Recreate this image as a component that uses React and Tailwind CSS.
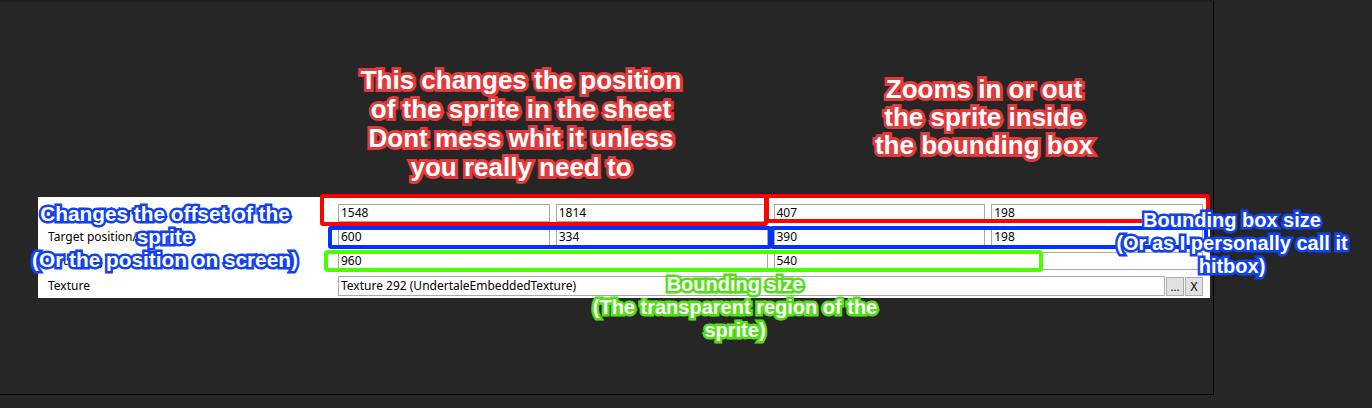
import React from 'react'

const rows = [
  { label: 'Source position/size', values: ['1548', '1814', '407', '198'] },
  { label: 'Target position/size', values: ['600', '334', '390', '198'] },
  { label: 'Bounding size', values: ['960', '540'] },
]

const notes = [
  {
    lines: ['This changes the position', 'of the sprite in the sheet', 'Dont mess whit it unless', 'you really need to'],
    cls: 'left-[341px] top-[66px] w-[360px] text-[26px] leading-[29px] [-webkit-text-stroke:6px_#e23a3a]',
  },
  {
    lines: ['Zooms in or out', 'the sprite inside', 'the bounding box'],
    cls: 'left-[834px] top-[75px] w-[300px] text-[26px] leading-[28px] [-webkit-text-stroke:6px_#e23a3a]',
  },
  {
    lines: ['Changes the offset of the', 'sprite', '(Or the position on screen)'],
    cls: 'left-[15px] top-[202px] w-[300px] text-[20.8px] leading-[23px] [-webkit-text-stroke:5px_#1242ee]',
  },
  {
    lines: ['Bounding box size', '(Or as I personally call it', 'hitbox)'],
    cls: 'left-[1092px] top-[209px] w-[280px] text-[20px] leading-[23px] [-webkit-text-stroke:5px_#1242ee]',
  },
  {
    lines: ['Bounding size', '(The transparent region of the', 'sprite)'],
    cls: 'left-[575px] top-[273px] w-[320px] text-[20px] leading-[23px] [-webkit-text-stroke:5px_#52e014]',
  },
]

function Field({ value, wide }) {
  return (
    <div className={`h-[18px] border border-[#a9a9a9] bg-white px-[2px] text-[12px] leading-[16px] text-black ${wide ? 'col-span-2' : ''}`}>
      {value}
    </div>
  )
}

export default function App() {
  return (
    <div className="relative w-[1372px] h-[408px] overflow-hidden bg-[#262626] font-['Liberation_Sans',Arial,sans-serif]">
      <div className="w-[1214px] h-[395px] border-t-2 border-t-[#1f1f1f] border-r border-b border-r-black border-b-black pt-[195px] pl-[38px]">
        <div className="w-[1172px] bg-white pt-[7px] pb-[2px] pr-[7px] flex flex-col gap-[6px] font-['Noto_Sans','Liberation_Sans',sans-serif]">
          {rows.map((row) => (
            <div key={row.label} className="flex items-center">
              <div className="w-[300px] pl-[10px] text-[12px] text-black leading-[18px]">{row.label}</div>
              <div className="flex-1 grid grid-cols-4 gap-[6px]">
                {row.values.length === 2
                  ? row.values.map((v) => <Field key={v} value={v} wide />)
                  : row.values.map((v, i) => <Field key={i} value={v} />)}
              </div>
            </div>
          ))}
          <div className="flex items-center">
            <div className="w-[300px] pl-[10px] text-[12px] text-black leading-[18px]">Texture</div>
            <div className="flex-1 flex gap-[1px] h-[20px]">
              <div className="flex-1 border border-[#a9a9a9] px-[2px] text-[12px] leading-[18px] text-black">
                Texture 292 (UndertaleEmbeddedTexture)
              </div>
              <button className="w-[18px] h-[19px] mt-[1px] border border-[#adadad] bg-[#e1e1e1] text-[11px] leading-[14px] text-black">...</button>
              <button className="w-[18px] h-[19px] mt-[1px] border border-[#adadad] bg-[#e1e1e1] text-[12px] leading-[16px] text-black">X</button>
            </div>
          </div>
        </div>
      </div>

      {/* annotation boxes drawn over the form */}
      <div className="absolute left-[320px] top-[194px] w-[448px] h-[32px] border-4 border-[#ff0000] rounded-[3px]" />
      <div className="absolute left-[765px] top-[194px] w-[445px] h-[29px] border-4 border-[#ff0000] rounded-[3px]" />
      <div className="absolute left-[328px] top-[226px] w-[444px] h-[23px] border-4 border-[#0033ff] rounded-[3px]" />
      <div className="absolute left-[770px] top-[226px] w-[438px] h-[23px] border-4 border-[#0033ff] rounded-[3px]" />
      <div className="absolute left-[324px] top-[250px] w-[719px] h-[22px] border-4 border-[#4cff00] rounded-[4px]" />

      {notes.map((n, i) => (
        <div
          key={i}
          className={`absolute text-center font-bold text-white whitespace-nowrap [paint-order:stroke_fill] font-['Liberation_Sans',Arial,sans-serif] ${n.cls}`}
        >
          {n.lines.map((l) => (
            <div key={l}>{l}</div>
          ))}
        </div>
      ))}
    </div>
  )
}
